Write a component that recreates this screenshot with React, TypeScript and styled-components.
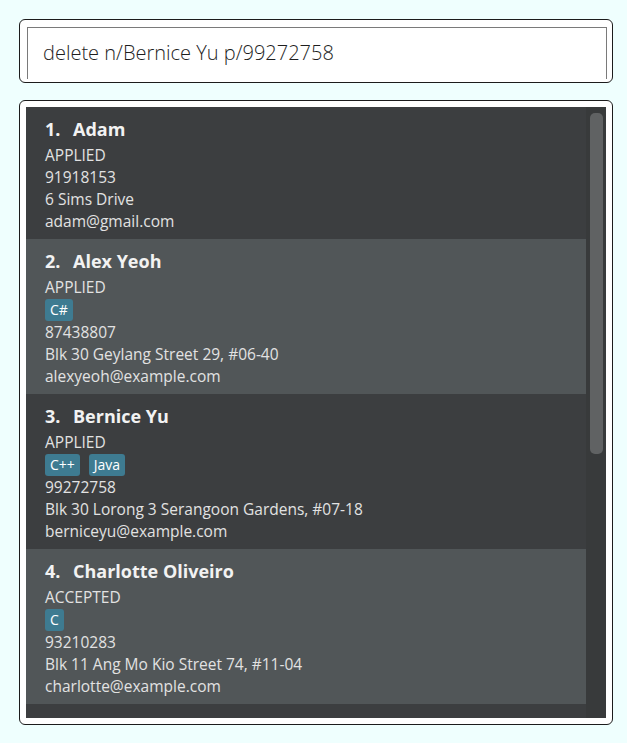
import React from "react";
import styled, { createGlobalStyle } from "styled-components";

const Global = createGlobalStyle`
  html, body { margin: 0; padding: 0; background: #effffe; }
  body { font-family: "Open Sans", "Noto Sans", sans-serif; }
`;

const Page = styled.div`
  width: 627px;
  height: 743px;
  box-sizing: border-box;
  padding: 19px 14px 0 19px;
  display: flex;
  flex-direction: column;
  gap: 17px;
`;

const Panel = styled.div<{ $h: number }>`
  height: ${(p) => p.$h}px;
  box-sizing: border-box;
  background: #ffffff;
  border: 1.5px solid #1c1c1c;
  border-radius: 6px;
  display: flex;
`;

const CommandPanel = styled(Panel)`
  padding: 7px 5px 3px 7px;
`;

const CommandField = styled.div`
  flex: 1;
  border: 1px solid #7a7a7a;
  border-bottom: none;
  display: flex;
  align-items: center;
  padding-left: 15px;
  padding-bottom: 2px;
  font-size: 20px;
  font-weight: 300;
  color: #1e1e1e;
`;

const ListPanel = styled(Panel)`
  padding: 6px 6px 6px 6px;
`;

const ListArea = styled.div`
  flex: 1;
  display: flex;
  background: #3c3e40;
  overflow: hidden;
`;

const Cards = styled.div`
  width: 560px;
  display: flex;
  flex-direction: column;
`;

const Track = styled.div`
  flex: 1;
  background: #383a3b;
  padding: 6px 3px 0 4px;
`;

const Thumb = styled.div`
  height: 341px;
  background: #606263;
  border-radius: 5px;
`;

const Card = styled.div<{ $alt: boolean }>`
  background: ${(p) => (p.$alt ? "#515658" : "#3c3e40")};
  padding: 8px 18px 7px 19px;
  display: flex;
  flex-direction: column;
  flex-shrink: 0;
`;

const Name = styled.div`
  font-weight: 700;
  font-size: 18px;
  line-height: 28px;
  margin-bottom: 1px;
  color: #f2f2f2;
  display: flex;
`;

const Index = styled.span`
  width: 28px;
`;

const Line = styled.div`
  font-size: 15.5px;
  line-height: 22px;
  color: #e2e2e2;
  white-space: nowrap;
`;

const Tags = styled.div`
  display: flex;
  gap: 9px;
  height: 23px;
  align-items: flex-start;
  padding-top: 1px;
  box-sizing: border-box;
`;

const Tag = styled.span`
  background: #3e7b91;
  color: #ffffff;
  font-size: 14px;
  line-height: 22px;
  height: 22px;
  padding: 0 5px;
  border-radius: 3px;
`;

type Person = {
  name: string;
  status: string;
  tags: string[];
  phone: string;
  address: string;
  email: string;
};

const people: Person[] = [
  { name: "Adam", status: "APPLIED", tags: [], phone: "91918153", address: "6 Sims Drive", email: "adam@gmail.com" },
  { name: "Alex Yeoh", status: "APPLIED", tags: ["C#"], phone: "87438807", address: "Blk 30 Geylang Street 29, #06-40", email: "alexyeoh@example.com" },
  { name: "Bernice Yu", status: "APPLIED", tags: ["C++", "Java"], phone: "99272758", address: "Blk 30 Lorong 3 Serangoon Gardens, #07-18", email: "berniceyu@example.com" },
  { name: "Charlotte Oliveiro", status: "ACCEPTED", tags: ["C"], phone: "93210283", address: "Blk 11 Ang Mo Kio Street 74, #11-04", email: "charlotte@example.com" },
];

export default function App() {
  return (
    <>
      <Global />
      <Page>
        <CommandPanel $h={64}>
          <CommandField>delete n/Bernice Yu p/99272758</CommandField>
        </CommandPanel>
        <ListPanel $h={625}>
          <ListArea>
            <Cards>
              {people.map((p, i) => (
                <Card key={p.name} $alt={i % 2 === 1}>
                  <Name>
                    <Index>{`${i + 1}.`}</Index>
                    <span>{p.name}</span>
                  </Name>
                  <Line>{p.status}</Line>
                  {p.tags.length > 0 && (
                    <Tags>
                      {p.tags.map((t) => (
                        <Tag key={t}>{t}</Tag>
                      ))}
                    </Tags>
                  )}
                  <Line>{p.phone}</Line>
                  <Line>{p.address}</Line>
                  <Line>{p.email}</Line>
                </Card>
              ))}
            </Cards>
            <Track>
              <Thumb />
            </Track>
          </ListArea>
        </ListPanel>
      </Page>
    </>
  );
}
